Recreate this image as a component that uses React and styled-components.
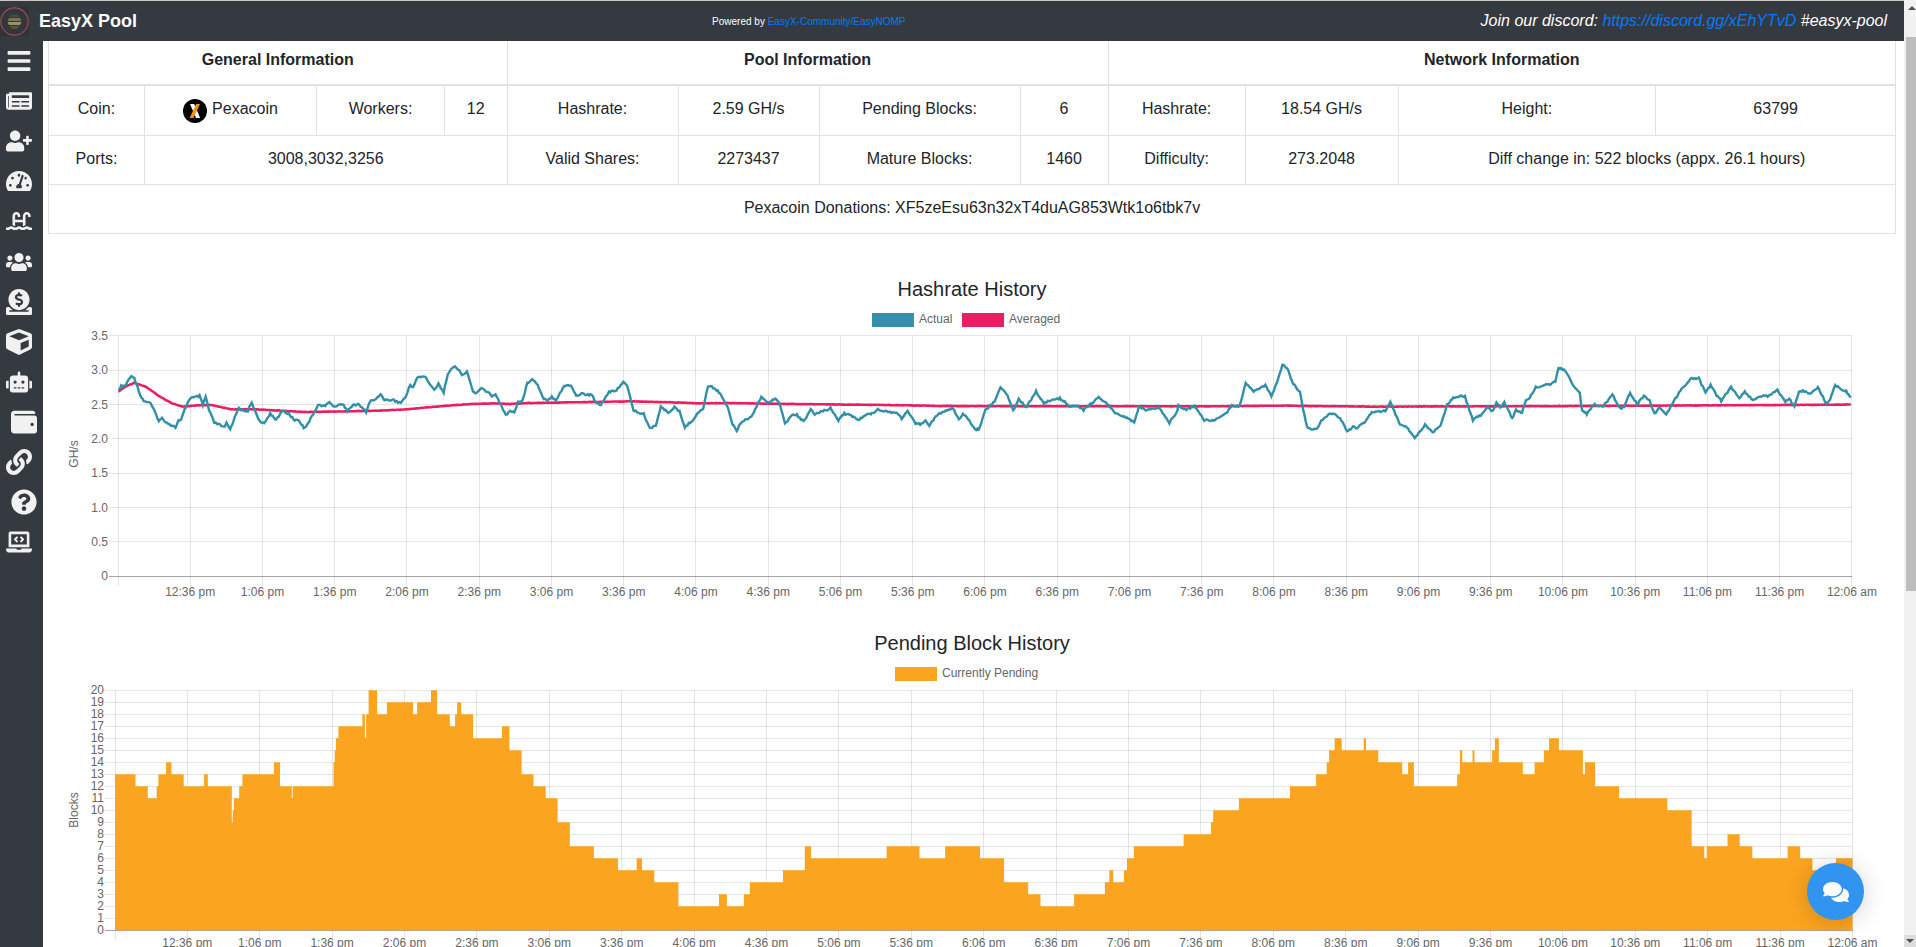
import React from 'react';
import styled, { createGlobalStyle } from 'styled-components';
import {
  FaBars, FaNewspaper, FaUserPlus, FaTachometerAlt, FaSwimmingPool, FaUsers, FaDonate,
  FaCube, FaRobot, FaWallet, FaLink, FaQuestionCircle, FaLaptopCode, FaComments,
} from 'react-icons/fa';

const GlobalStyle = createGlobalStyle`
  html, body {
    margin: 0;
    height: 100%;
    overflow: hidden;
    background: #fff;
  }
  body {
    font-family: "Liberation Sans", Arial, sans-serif;
    font-size: 16px;
    color: #212529;
  }
`;

const Shell = styled.div`
  display: flex;
  height: 100vh;
  overflow: hidden;
`;

const Page = styled.div`
  flex: 1;
  min-width: 0;
  overflow: hidden;
`;

const ScrollBar = styled.div`
  flex: 0 0 12px;
  display: flex;
  flex-direction: column;
  background: #f1f1f1;
`;

const ScrollTop = styled.div`
  height: 37px;
  flex: none;
  display: flex;
  justify-content: center;
  padding: 6px 0 0 3px;
  box-sizing: border-box;
`;

const ScrollThumb = styled.div`
  height: 554px;
  flex: none;
  margin-left: 2px;
  background: #bdbdbd;
`;

const ScrollBottom = styled.div`
  margin-top: auto;
  height: 12px;
  flex: none;
  background: #dcdcdc;
  display: flex;
  align-items: center;
  justify-content: center;
`;

const Arrow = styled.span`
  width: 0;
  height: 0;
  border-left: 4px solid transparent;
  border-right: 4px solid transparent;
  ${(p) => (p.$down ? 'border-top: 4px solid #505050;' : 'border-bottom: 4px solid #505050;')}
`;

const Navbar = styled.nav`
  height: 40px;
  border-top: 1px solid #cbc8c4;
  background: #343a40;
  display: flex;
  justify-content: space-between;
  align-items: center;
  color: #fff;
`;

const Brand = styled.div`
  display: flex;
  align-items: center;
  gap: 10px;
  font-size: 18px;
  font-weight: 700;
`;

const Powered = styled.div`
  font-size: 10px;
  a { color: #007bff; text-decoration: none; }
`;

const Discord = styled.div`
  padding-right: 17px;
  font-size: 16px;
  font-style: italic;
  a { color: #007bff; text-decoration: none; }
`;

const Layout = styled.div`
  display: flex;
  align-items: flex-start;
`;

const Sidebar = styled.aside`
  flex: 0 0 43px;
  height: 906px;
  background: #343a40;
  display: flex;
  flex-direction: column;
`;

const SideItem = styled.div`
  height: 40.1px;
  flex: none;
  display: flex;
  align-items: center;
  padding-left: ${(p) => (p.$shift ? 11 : 6)}px;
  color: #f1f1f1;
  font-size: 26px;
`;

const Main = styled.main`
  flex: 1;
  min-width: 0;
  padding: 0 8px 0 5px;
`;

const InfoTable = styled.table`
  width: 1847px;
  table-layout: fixed;
  border-collapse: collapse;
  text-align: center;
  th, td {
    box-sizing: border-box;
    border: 1px solid #dee2e6;
    padding: 0 4px 2px;
  }
  tr:first-child th { border-top: 0; }
`;

const HeadCell = styled.th`
  height: 44px;
  padding-bottom: 6px !important;
  font-weight: 700;
  border-bottom-width: 2px !important;
`;

const Cell = styled.td`
  height: ${(p) => p.$h || 49}px;
`;

const Coin = styled.span`
  display: inline-flex;
  align-items: center;
  gap: 5px;
  vertical-align: middle;
`;

const CoinLogo = styled.svg`
  position: relative;
  top: 2px;
  flex: none;
`;

const ChartBox = styled.svg`
  display: block;
  width: 1848px;
  height: 354px;
`;

const ChartTitle = styled.text`
  font-size: 20px;
  fill: #212529;
  text-anchor: middle;
  dominant-baseline: central;
`;

const AxisLabel = styled.text`
  font-size: 12px;
  fill: #666;
  dominant-baseline: central;
  text-anchor: ${(p) => p.$anchor || 'middle'};
`;

const ChatButton = styled.button`
  position: fixed;
  right: 52px;
  bottom: 27px;
  width: 57px;
  height: 57px;
  padding: 0;
  border: 0;
  border-radius: 50%;
  background: #3094f0;
  color: #fff;
  display: flex;
  align-items: center;
  justify-content: center;
  box-shadow: 0 2px 24px rgba(0, 0, 0, 0.18);
`;

const ChartStack = styled.div`
  margin-top: 28px;
`;

const sideIcons = [
  [FaBars], [FaNewspaper], [FaUserPlus], [FaTachometerAlt], [FaSwimmingPool], [FaUsers], [FaDonate],
  [FaCube], [FaRobot], [FaWallet, true], [FaLink], [FaQuestionCircle, true], [FaLaptopCode],
];

const Logo = () => (
  <svg width="29" height="29" viewBox="0 0 29 29">
    <rect width="29" height="29" fill="#2f3238" />
    <circle cx="14.5" cy="14.5" r="13.7" fill="#33363b" stroke="#a04c50" strokeWidth="1.2" />
    <path d="M11.5 7.5h6l2 2.5h-10z" fill="#4c4a3e" />
    <path d="M9 11h11l1.5 3h-14z" fill="#7a7358" />
    <path d="M7.5 15h14l-1.5 3H9z" fill="#9a9070" />
    <path d="M9.5 19h10l-2.5 3h-5z" fill="#57523f" />
  </svg>
);

const CoinIcon = () => (
  <CoinLogo width="24" height="24" viewBox="0 0 24 24">
    <circle cx="12" cy="12" r="12" fill="#000" />
    <path d="M7 5h4.2l6 14H13z" fill="#fff" />
    <path d="M13.2 5H17l-6.6 14H6.6z" fill="#f7931a" />
  </CoinLogo>
);

// chart data was read off the zoomed crops, x is scaled per crop
const crop = (left, scale, pts) => pts.map(([x, y]) => [left + x / scale, 270 + y / 3]);

const actual = [
  ...crop(60, 2.45, [[143,362],[150,348],[160,347],[168,330],[175,316],[182,325],[190,350],[197,378],[205,392],[222,400],[232,425],[242,452],[250,445],[262,458],[272,465],[283,472],[290,452],[297,450],[305,420],[318,385],[330,382],[342,378],[350,405],[357,380],[365,420],[378,458],[392,465],[403,472],[408,460],[417,478],[425,452],[438,412],[450,425],[460,422],[470,398],[477,420],[490,455],[500,462],[515,430],[530,450],[545,422],[560,432],[575,450],[585,450],[597,473],[605,465],[617,440],[632,405],[650,408],[660,395],[672,412],[683,402],[695,405],[704,422],[715,408],[730,402],[750,425],[760,393],[772,390],[785,372],[795,388],[805,392],[815,388],[825,395],[835,398],[848,378],[858,345],[865,352],[875,322],[895,320],[910,350],[917,360],[927,340],[940,368],[950,310],[965,290],[978,298],[985,318],[997,305],[1012,365],[1020,370],[1033,355],[1050,368],[1058,378],[1067,372],[1080,405],[1092,435],[1103,422],[1113,428],[1122,395],[1132,395],[1145,340],[1157,325],[1170,345],[1185,385],[1195,390],[1205,380],[1215,390],[1235,348],[1252,346],[1265,378],[1280,370],[1290,375],[1303,375],[1312,395],[1325,405],[1345,365],[1360,365],[1380,335],[1390,350],[1405,420],[1420,430],[1430,432],[1445,475],[1460,465],[1472,410],[1490,428],[1505,412],[1518,425],[1531,472],[1550,450]]),
  ...crop(700, 2.529, [[0,422],[8,415],[20,350],[30,350],[45,362],[58,385],[70,410],[82,462],[93,482],[105,455],[130,440],[155,380],[170,398],[190,385],[200,395],[215,462],[232,435],[245,435],[262,455],[280,418],[290,435],[305,425],[330,415],[350,450],[365,430],[385,438],[400,450],[420,435],[435,430],[450,418],[475,425],[500,430],[510,445],[525,423],[545,462],[560,462],[570,450],[580,465],[600,435],[625,420],[640,415],[655,448],[665,430],[680,450],[695,478],[705,478],[722,420],[745,395],[760,352],[778,375],[792,422],[806,387],[825,412],[850,365],[870,400],[890,390],[910,385],[935,408],[955,408],[970,420],[985,405],[1008,383],[1025,395],[1050,430],[1080,445],[1098,455],[1110,412],[1130,420],[1160,412],[1187,458],[1205,430],[1210,408],[1230,420],[1250,408],[1275,450],[1300,452],[1330,430],[1345,408],[1365,408],[1380,340],[1400,365],[1430,345],[1445,380],[1460,335],[1473,282],[1485,295],[1500,340],[1510,355]]),
  ...crop(1300, 2.545, [[0,365],[8,420],[18,470],[30,478],[42,478],[55,450],[78,430],[90,432],[105,450],[120,485],[135,470],[145,475],[170,450],[183,425],[205,425],[220,420],[230,395],[240,425],[255,465],[272,472],[292,505],[318,465],[338,487],[358,465],[375,402],[390,385],[408,378],[420,380],[440,450],[460,435],[478,410],[490,425],[500,396],[510,412],[520,396],[540,445],[550,420],[565,428],[575,390],[585,382],[600,352],[620,345],[640,342],[650,335],[658,292],[675,302],[695,345],[712,370],[718,420],[730,432],[750,402],[770,412],[795,373],[815,415],[825,410],[840,370],[858,402],[875,378],[890,392],[902,432],[915,412],[932,435],[945,405],[965,368],[980,345],[997,325],[1015,325],[1032,368],[1045,345],[1060,375],[1072,392],[1097,352],[1118,385],[1132,365],[1152,390],[1170,380],[1190,378],[1215,360],[1235,395],[1245,385],[1258,410],[1270,368],[1280,362],[1300,372],[1318,352],[1340,402],[1350,385],[1362,345],[1378,360],[1390,362],[1405,390]]),
];

const averaged = [
  ...crop(60, 2.45, [[143,365],[160,350],[182,338],[210,350],[245,380],[275,400],[300,410],[340,406],[370,405],[420,418],[480,418],[540,422],[600,426],[700,424],[780,422],[850,418],[900,412],[960,406],[1010,402],[1070,400],[1100,402],[1150,399],[1250,397],[1400,394],[1500,397]]),
  ...crop(700, 2.529, [[0,400],[80,399],[230,402],[480,405],[610,408],[1290,409],[1480,407]]),
  ...crop(1300, 2.545, [[190,410],[700,408],[1060,406],[1380,404],[1405,403]]),
];

// [end of step in crop px, blocks]
const pendingSteps = [
  [60, 2.45, [[185,13],[215,12],[237,11],[241,12],[260,13],[273,14],[303,13],[353,12],[362,13],[421,12],[423,9],[426,10],[439,11],[447,12],[524,13],[539,14],[568,12],[570,11],[670,12],[673,14],[676,15],[682,16],[741,17],[747,18],[750,16],[756,18],[777,20],[801,18],[865,19],[875,18],[909,19],[924,20],[955,18],[968,17],[973,18],[983,19],[1012,18],[1083,16],[1101,17],[1131,15],[1160,13],[1190,12],[1219,11],[1249,9],[1308,7],[1367,6],[1413,5],[1426,6],[1456,5],[1515,4],[1568,2]]],
  [700, 2.529, [[48,2],[68,3],[111,2],[126,3],[210,4],[265,5],[281,7],[472,6],[555,7],[620,6],[708,7],[769,6],[830,4],[861,3],[946,2],[1024,3],[1035,4],[1045,5],[1072,4],[1080,5],[1097,6],[1223,7],[1292,8],[1298,9],[1363,10],[1492,11],[1558,12]]],
  [1300, 2.545, [[68,13],[74,14],[88,15],[106,16],[162,15],[168,16],[199,15],[260,14],[275,13],[290,14],[400,12],[407,13],[413,15],[439,14],[444,15],[489,14],[496,15],[506,16],[567,14],[597,13],[621,14],[634,15],[659,16],[720,15],[725,13],[751,14],[812,12],[935,11],[997,10],[1029,7],[1035,6],[1088,7],[1119,8],[1151,7],[1241,6],[1273,7],[1304,6],[1364,5],[1406,6]]],
];

const timeLabels = [
  '12:36 pm', '1:06 pm', '1:36 pm', '2:06 pm', '2:36 pm', '3:06 pm', '3:36 pm', '4:06 pm', '4:36 pm', '5:06 pm', '5:36 pm', '6:06 pm',
  '6:36 pm', '7:06 pm', '7:36 pm', '8:06 pm', '8:36 pm', '9:06 pm', '9:36 pm', '10:06 pm', '10:36 pm', '11:06 pm', '11:36 pm', '12:06 am',
];

// resample to about a pixel and add the small wobble the real series has
const wobble = (pts, amount) => {
  const out = [];
  for (let i = 0; i < pts.length - 1; i++) {
    const [x0, y0] = pts[i];
    const [x1, y1] = pts[i + 1];
    if (x1 <= x0) continue;
    const n = Math.max(1, Math.round((x1 - x0) / 1.3));
    for (let k = 0; k < n; k++) {
      const t = k / n;
      const seed = Math.sin(out.length * 12.9898) * 43758.5453;
      const jitter = (seed - Math.floor(seed) - 0.5) * amount;
      out.push(`${(x0 + (x1 - x0) * t).toFixed(1)},${(y0 + (y1 - y0) * t + jitter).toFixed(1)}`);
    }
  }
  return out.join(' ');
};

const grid = 'rgba(0,0,0,0.1)';
const axis = 'rgba(0,0,0,0.35)';

const Grid = ({ left, right, top, bottom, yTicks, tickLeft, tickStep, firstTick }) => (
  <g shapeRendering="crispEdges" strokeWidth="1">
    {yTicks.map((y, i) => (
      <line key={`h-${i}`} x1={left - 10} x2={right} y1={y} y2={y} stroke={i === yTicks.length - 1 ? axis : grid} />
    ))}
    <line x1={tickLeft} x2={tickLeft} y1={top} y2={bottom + 10} stroke={grid} />
    {timeLabels.map((_, i) => {
      const x = firstTick + tickStep * i;
      return <line key={`v-${i}`} x1={x} x2={x} y1={top} y2={bottom + 10} stroke={grid} />;
    })}
  </g>
);

const Legend = ({ x, y, color, label }) => (
  <g>
    <rect x={x} y={y} width="42" height="14" fill={color} />
    <AxisLabel x={x + 47} y={y + 6} $anchor="start">{label}</AxisLabel>
  </g>
);

const HashrateChart = () => {
  const levels = [3.5, 3, 2.5, 2, 1.5, 1, 0.5, 0];
  const yOf = (v) => 576.3 - v * 68.7;
  return (
    <ChartBox viewBox="48 262 1848 354">
      <ChartTitle x="972" y="289">Hashrate History</ChartTitle>
      <Legend x={872} y={313} color="#368fae" label="Actual" />
      <Legend x={962} y={313} color="#ea1f63" label="Averaged" />
      <Grid left={118.5} right={1852} top={336} bottom={576.3} tickLeft={118.5} firstTick={190.2} tickStep={72.25} yTicks={levels.map(yOf)} />
      {levels.map((v) => (
        <AxisLabel key={v} x="108" y={yOf(v)} $anchor="end">{v === 0 ? '0' : v.toFixed(1)}</AxisLabel>
      ))}
      {timeLabels.map((t, i) => (
        <AxisLabel key={t} x={190.2 + 72.25 * i} y="592">{t}</AxisLabel>
      ))}
      <AxisLabel transform="rotate(-90 73.5 454)" x="73.5" y="454">GH/s</AxisLabel>
      <polyline points={wobble(averaged, 0.3)} fill="none" stroke="#ea1f63" strokeWidth="2.6" />
      <polyline points={wobble(actual, 1.8)} fill="none" stroke="#328fa9" strokeWidth="2.4" />
    </ChartBox>
  );
};

const PendingChart = () => {
  const levels = Array.from({ length: 21 }, (_, i) => 20 - i);
  const yOf = (v) => 930.3 - v * 12;
  let path = `M115 930.3 L115 ${yOf(13)}`;
  pendingSteps.forEach(([left, scale, steps]) => {
    steps.forEach(([end, level]) => {
      path += ` V${yOf(level)} H${(left + end / scale).toFixed(1)}`;
    });
  });
  path += ' V930.3 Z';
  return (
    <ChartBox viewBox="48 616 1848 354">
      <ChartTitle x="972" y="643">Pending Block History</ChartTitle>
      <Legend x={895} y={667} color="#fba41f" label="Currently Pending" />
      <Grid left={115} right={1852.5} top={690.3} bottom={930.3} tickLeft={115} firstTick={187.3} tickStep={72.4} yTicks={levels.map(yOf)} />
      {levels.map((v) => (
        <AxisLabel key={v} x="104" y={yOf(v)} $anchor="end">{v}</AxisLabel>
      ))}
      {timeLabels.map((t, i) => (
        <AxisLabel key={t} x={187.3 + 72.4 * i} y="943">{t}</AxisLabel>
      ))}
      <AxisLabel transform="rotate(-90 73.5 810)" x="73.5" y="810">Blocks</AxisLabel>
      <path d={path} fill="#fba41f" />
    </ChartBox>
  );
};

const colWidths = [96, 172, 128, 62.5, 171, 141, 201, 88, 137, 153, 257.5, 240];

export default function App() {
  return (
    <Shell>
      <GlobalStyle />
      <Page>
        <Navbar>
          <Brand><Logo />EasyX Pool</Brand>
          <Powered>Powered by <a href="#top">EasyX-Community/EasyNOMP</a></Powered>
          <Discord>Join our discord: <a href="#top">https://discord.gg/xEhYTvD</a> #easyx-pool</Discord>
        </Navbar>
        <Layout>
          <Sidebar>
            {sideIcons.map(([Icon, shift], i) => (
              <SideItem key={i} $shift={shift}><Icon /></SideItem>
            ))}
          </Sidebar>
          <Main>
            <InfoTable>
              <colgroup>
                {colWidths.map((w, i) => <col key={i} width={w} />)}
              </colgroup>
              <thead>
                <tr>
                  <HeadCell colSpan={4}>General Information</HeadCell>
                  <HeadCell colSpan={4}>Pool Information</HeadCell>
                  <HeadCell colSpan={4}>Network Information</HeadCell>
                </tr>
              </thead>
              <tbody>
                <tr>
                  <Cell $h={50}>Coin:</Cell>
                  <Cell $h={50}><Coin><CoinIcon />Pexacoin</Coin></Cell>
                  <Cell $h={50}>Workers:</Cell>
                  <Cell $h={50}>12</Cell>
                  <Cell $h={50}>Hashrate:</Cell>
                  <Cell $h={50}>2.59 GH/s</Cell>
                  <Cell $h={50}>Pending Blocks:</Cell>
                  <Cell $h={50}>6</Cell>
                  <Cell $h={50}>Hashrate:</Cell>
                  <Cell $h={50}>18.54 GH/s</Cell>
                  <Cell $h={50}>Height:</Cell>
                  <Cell $h={50}>63799</Cell>
                </tr>
                <tr>
                  <Cell>Ports:</Cell>
                  <Cell colSpan={3}>3008,3032,3256</Cell>
                  <Cell>Valid Shares:</Cell>
                  <Cell>2273437</Cell>
                  <Cell>Mature Blocks:</Cell>
                  <Cell>1460</Cell>
                  <Cell>Difficulty:</Cell>
                  <Cell>273.2048</Cell>
                  <Cell colSpan={2}>Diff change in: 522 blocks (appx. 26.1 hours)</Cell>
                </tr>
                <tr>
                  <Cell colSpan={12}>Pexacoin Donations: XF5zeEsu63n32xT4duAG853Wtk1o6tbk7v</Cell>
                </tr>
              </tbody>
            </InfoTable>
            <ChartStack>
              <HashrateChart />
              <PendingChart />
            </ChartStack>
          </Main>
        </Layout>
      </Page>
      <ScrollBar>
        <ScrollTop><Arrow /></ScrollTop>
        <ScrollThumb />
        <ScrollBottom><Arrow $down /></ScrollBottom>
      </ScrollBar>
      <ChatButton aria-label="Chat"><FaComments size={26} /></ChatButton>
    </Shell>
  );
}
